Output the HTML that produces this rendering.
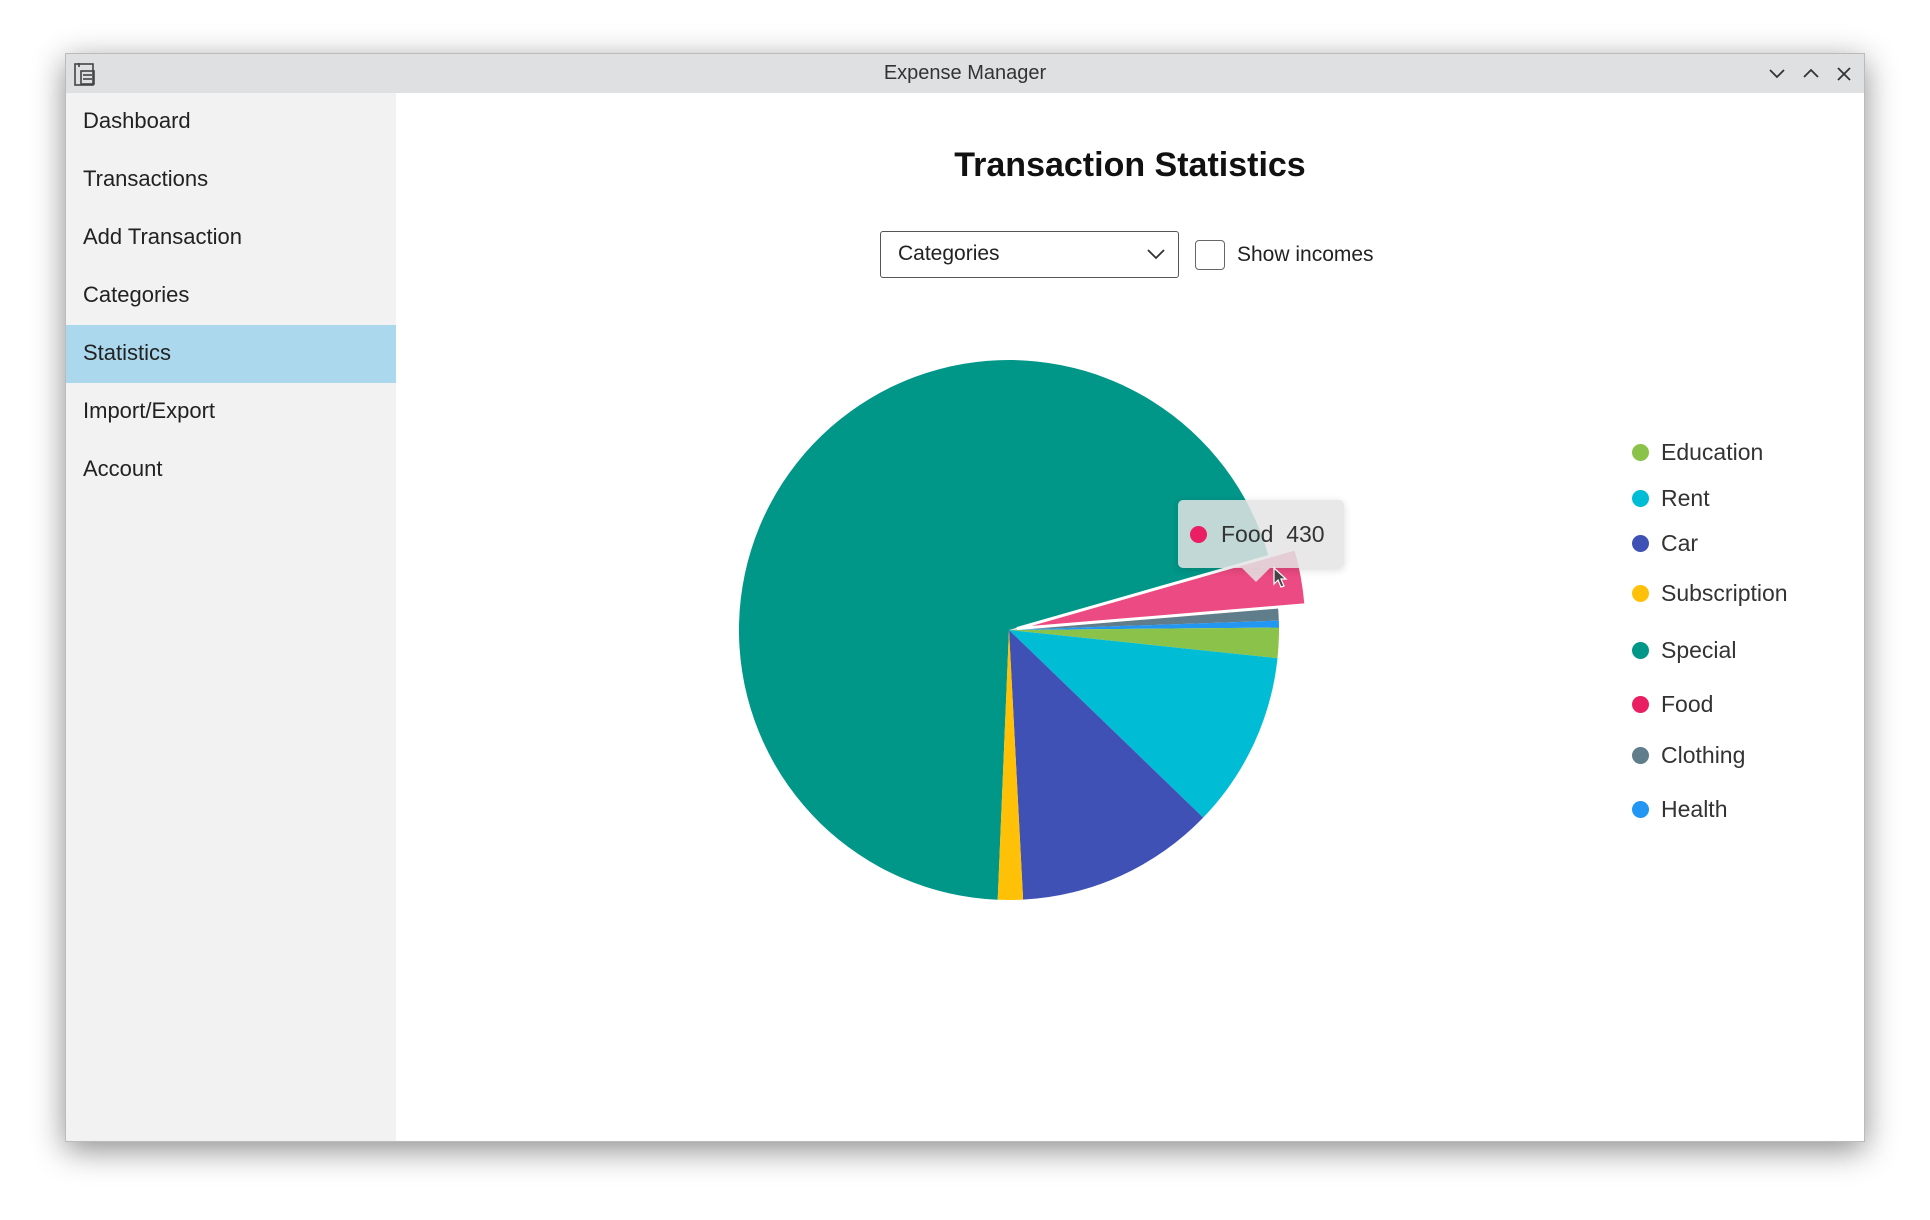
<!DOCTYPE html>
<html><head><meta charset="utf-8"><style>
*{margin:0;padding:0;box-sizing:border-box}
body{width:1930px;height:1220px;background:#fff;font-family:"Liberation Sans",sans-serif;position:relative;overflow:hidden}
.win{position:absolute;left:65px;top:53px;width:1800px;height:1089px;background:#fff;box-shadow:0 8px 30px rgba(0,0,0,.45);border:1px solid #bbb}
.tb{position:absolute;left:0;top:0;right:0;height:39px;background:#dfe0e1;text-align:center;font-size:20px;line-height:39px;color:#333}
.side{position:absolute;left:0;top:39px;width:330px;bottom:0;background:#f2f2f2}
.side div{height:58px;line-height:56px;padding-left:17px;font-size:22px;color:#222}
.side .sel{background:#abd8ed}
.title{position:absolute;left:330px;right:0;top:92px;text-align:center;font-size:34px;font-weight:bold;color:#111}
.dd{position:absolute;left:814px;top:177px;width:299px;height:47px;border:1.5px solid #555;border-radius:3px;font-size:21px;line-height:44px;padding-left:17px;color:#222}
.cb{position:absolute;left:1129px;top:186px;width:30px;height:30px;border:1.5px solid #666;border-radius:4px}
.sh{position:absolute;left:1171px;top:186px;font-size:21px;line-height:30px;color:#222}
.lg{position:absolute;left:1632px;font-size:23px;color:#333;line-height:28px}
.lg i{display:inline-block;width:17px;height:17px;border-radius:50%;margin-right:12px;vertical-align:-1px}
.tt{position:absolute;left:1178px;top:500px;width:166px;height:68px;background:rgba(228,228,228,.85);border-radius:5px;box-shadow:0 2px 8px rgba(0,0,0,.15);font-size:23px;line-height:68px;color:#333;padding-left:43px}
.tt i{position:absolute;left:12px;top:26px;width:17px;height:17px;border-radius:50%;background:#e91e63}
.tt b{position:absolute;left:64px;bottom:-14px;width:0;height:0;border-left:14px solid transparent;border-right:14px solid transparent;border-top:14px solid rgba(228,228,228,.85)}
</style></head><body>
<div class="win">
<div class="tb">Expense Manager
<svg style="position:absolute;left:6px;top:7px" width="26" height="26" viewBox="0 0 26 26" fill="none" stroke="#444" stroke-width="1.6"><rect x="3" y="3" width="18" height="21"/><rect x="9" y="10" width="13" height="13"/><line x1="7" y1="2" x2="7" y2="6"/><line x1="11" y1="14" x2="20" y2="14"/><line x1="11" y1="18" x2="20" y2="18"/></svg>
<svg style="position:absolute;right:6px;top:10px" width="90" height="20" viewBox="0 0 90 20" fill="none" stroke="#333" stroke-width="1.8"><path d="M2 6l7 7 7-7"/><path d="M36 13l7-7 7 7"/><path d="M70 4l12 12M82 4l-12 12"/></svg>
</div>
<div class="side">
<div>Dashboard</div><div>Transactions</div><div>Add Transaction</div><div>Categories</div><div class="sel">Statistics</div><div>Import/Export</div><div>Account</div>
</div>
<div class="title">Transaction Statistics</div>
<div class="dd">Categories<svg style="position:absolute;right:12px;top:15px" width="20" height="14" viewBox="0 0 20 14" fill="none" stroke="#333" stroke-width="1.8"><path d="M2 3l8 8 8-8"/></svg></div>
<div class="cb"></div><div class="sh">Show incomes</div>
</div>
<svg style="position:absolute;left:0;top:0" width="1930" height="1220">
<path d="M1009 630 L997.7 899.8 A270 270 0 1 1 1268.5 555.6 Z" fill="#009688"/>
<path d="M1009 630 L1278.1 607.9 A270 270 0 0 1 1278.8 620.6 Z" fill="#607d8b"/>
<path d="M1009 630 L1278.8 620.6 A270 270 0 0 1 1279 627.6 Z" fill="#2196f3"/>
<path d="M1009 630 L1279 627.6 A270 270 0 0 1 1277.5 658.2 Z" fill="#8bc34a"/>
<path d="M1009 630 L1277.5 658.2 A270 270 0 0 1 1203.2 817.6 Z" fill="#00bcd4"/>
<path d="M1009 630 L1203.2 817.6 A270 270 0 0 1 1023.1 899.6 Z" fill="#3f51b5"/>
<path d="M1009 630 L1023.1 899.6 A270 270 0 0 1 997.7 899.8 Z" fill="#ffc107"/>
<path d="M1016.9 628.6 L1295.7 548.7 A290 290 0 0 1 1305.9 604.8 Z" fill="#ec4a82" stroke="#fff" stroke-width="3"/>
</svg>
<div class="tt"><i></i>Food&nbsp;&nbsp;430<b></b></div>
<svg style="position:absolute;left:1272px;top:566px" width="16" height="24" viewBox="0 0 16 24"><path d="M2 2v16l4-4 3 7 3-1-3-7h5z" fill="#444" stroke="#fff" stroke-width="1.2"/></svg>
<div class="lg" style="top:438px"><i style="background:#8bc34a"></i>Education</div>
<div class="lg" style="top:484px"><i style="background:#00bcd4"></i>Rent</div>
<div class="lg" style="top:529px"><i style="background:#3f51b5"></i>Car</div>
<div class="lg" style="top:579px"><i style="background:#ffc107"></i>Subscription</div>
<div class="lg" style="top:636px"><i style="background:#009688"></i>Special</div>
<div class="lg" style="top:690px"><i style="background:#e91e63"></i>Food</div>
<div class="lg" style="top:741px"><i style="background:#607d8b"></i>Clothing</div>
<div class="lg" style="top:795px"><i style="background:#2196f3"></i>Health</div>
</body></html>
